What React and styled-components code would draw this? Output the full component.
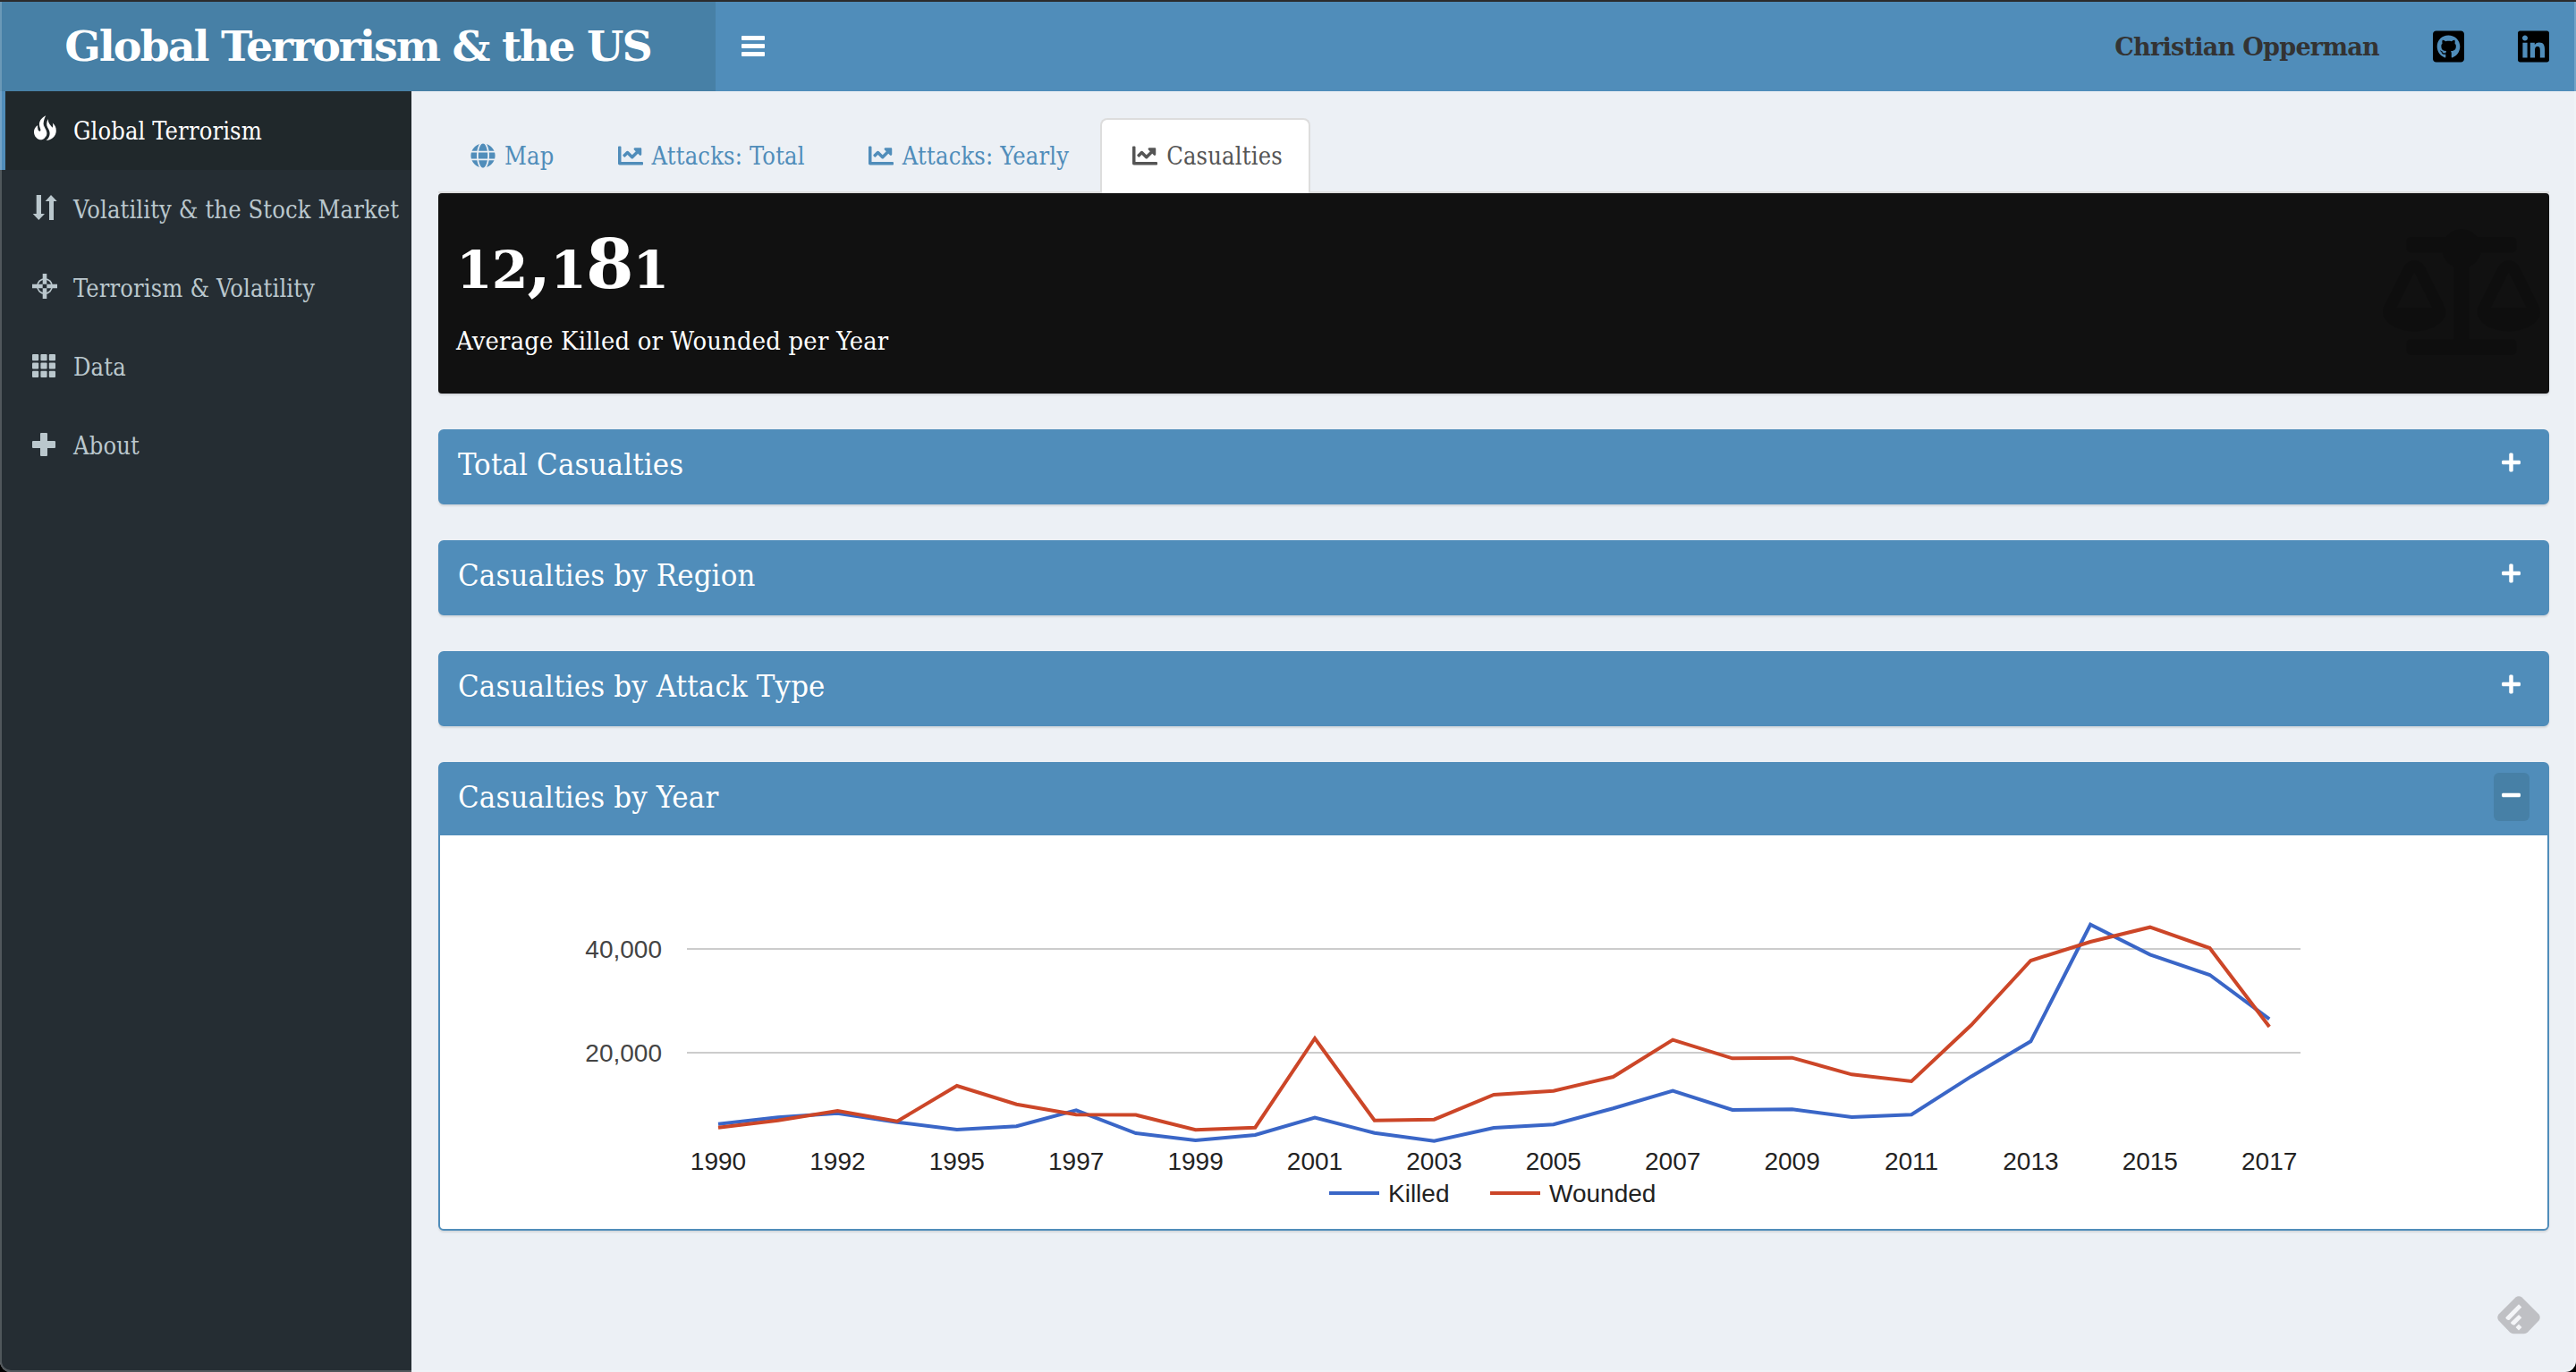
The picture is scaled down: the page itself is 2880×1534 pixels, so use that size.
import React from "react";
import styled, { createGlobalStyle } from "styled-components";
import {
  FaBalanceScale,
  FaChartLine,
  FaGithubSquare,
  FaGlobe,
  FaLinkedin,
  FaMinus,
  FaPlus,
} from "react-icons/fa";

const serif = `Georgia, "DejaVu Serif Condensed", "DejaVu Serif", serif`;
const serifBold = `Georgia, "DejaVu Serif", serif`;

const GlobalStyle = createGlobalStyle`
  * {
    box-sizing: border-box;
  }

  body {
    margin: 0;
    background: #000;
    font-family: ${serif};
  }
`;

const Page = styled.div`
  position: relative;
  display: flex;
  flex-direction: column;
  height: 1534px;
  overflow: hidden;
  border-top: 2px solid #2b2b2c;
  border-radius: 0 0 12px 12px;
  background: #ecf0f5;
`;

// Thin highlight that runs round the window
const WindowEdge = styled.div`
  position: absolute;
  inset: 0;
  border: 2px solid rgba(255, 255, 255, 0.2);
  border-top: 0;
  border-radius: 0 0 12px 12px;
  pointer-events: none;
`;

const Header = styled.header`
  display: flex;
  flex: none;
  height: 100px;
  background: #508dba;
`;

const Logo = styled.div`
  width: 800px;
  background: #4780a6;
  color: #fff;
  font-family: ${serifBold};
  font-size: 47.5px;
  font-weight: bold;
  letter-spacing: -2px;
  line-height: 99px;
  text-align: center;
  white-space: nowrap;
`;

const Navbar = styled.nav`
  display: flex;
  flex: 1;
  align-items: center;
  padding: 0 30px 0 29px;
`;

const Toggle = styled.div`
  display: flex;
  flex-direction: column;
  gap: 4px;
  width: 26px;
  margin: -2px auto 0 0;
`;

const ToggleBar = styled.span`
  height: 5px;
  border-radius: 1px;
  background: #fff;
`;

const Author = styled.span`
  margin-right: 60px;
  color: #333;
  font-family: ${serifBold};
  font-size: 27px;
  font-weight: bold;
  letter-spacing: -0.7px;
  white-space: nowrap;
`;

const SocialLink = styled.a`
  display: flex;
  margin-left: ${(props) => (props.$spaced ? "60px" : "0")};
  color: #000;
  font-size: 40px;

  svg {
    width: 35px;
  }
`;

const Main = styled.div`
  display: flex;
  flex: 1;
`;

const Sidebar = styled.aside`
  flex: none;
  width: 460px;
  background: #252d33;
`;

const MenuItem = styled.div`
  display: flex;
  align-items: center;
  height: 88px;
  padding-left: 30px;
  border-left: 6px solid ${(props) => (props.$active ? "#508dba" : "#252d33")};
  background: ${(props) => (props.$active ? "#20282b" : "transparent")};
  color: ${(props) => (props.$active ? "#fff" : "#bac7cd")};
  font-size: 27px;
  letter-spacing: 0.15px;
  white-space: nowrap;
`;

const MenuIcon = styled.svg`
  width: 28px;
  height: 28px;
  margin: -4px 18px 0 0;
  overflow: visible;
`;

const Content = styled.main`
  flex: 1;
  padding: 30px;
`;

const Tabs = styled.div`
  display: flex;
  height: 84px;
  border-bottom: 2px solid #ddd;
`;

const Tab = styled.div`
  display: flex;
  align-items: center;
  height: 84px;
  margin-right: 4px;
  padding: 0 29px 2px 34px;
  border: 2px solid ${(props) => (props.$active ? "#ddd" : "transparent")};
  border-bottom: 0;
  border-radius: 8px 8px 0 0;
  background: ${(props) => (props.$active ? "#fff" : "transparent")};
  color: ${(props) => (props.$active ? "#555" : "#508dba")};
  font-size: 27px;
  letter-spacing: 0.2px;
  white-space: nowrap;

  svg {
    width: 28px;
    height: 28px;
    margin-right: 10px;
  }
`;

const ValueBox = styled.section`
  display: flex;
  justify-content: space-between;
  height: 224px;
  padding: 40px 10px 0 20px;
  border-radius: 4px;
  background: #111;
  box-shadow: 0 2px 2px rgba(0, 0, 0, 0.1);
  color: #fff;
`;

const Value = styled.div`
  height: 94px;
  font-family: "DejaVu Serif", serif;
  font-size: 77px;
  font-weight: bold;
  letter-spacing: -1px;
  line-height: 79px;
  white-space: nowrap;
`;

const SmallFigure = styled.span`
  font-size: 58.5px;
`;

const ValueLabel = styled.div`
  font-size: 28.8px;
  letter-spacing: 0.2px;
  line-height: 62px;
`;

const ValueIcon = styled(FaBalanceScale)`
  width: 176px;
  height: 141px;
  color: rgba(0, 0, 0, 0.15);
`;

const Box = styled.section`
  margin-top: 40px;
  border: 2px solid #508dba;
  border-radius: 6px;
  background: #fff;
  box-shadow: 0 2px 2px rgba(0, 0, 0, 0.1);
`;

const BoxHeader = styled.div`
  display: flex;
  justify-content: space-between;
  height: 80px;
  padding: 0 20px;
  background: #508dba;
  color: #fff;
`;

const BoxTitle = styled.h3`
  margin: 0;
  font-size: 34.4px;
  font-weight: normal;
  letter-spacing: 0.15px;
  line-height: 74px;
`;

const BoxButton = styled.button`
  display: flex;
  align-items: flex-start;
  justify-content: center;
  width: 40px;
  height: 54px;
  margin-top: 10px;
  padding: 13px 1px 0 0;
  border: 0;
  border-radius: 6px;
  background: ${(props) => (props.$pressed ? "#4780a6" : "transparent")};
  color: #fff;
  font-size: 24px;

  svg {
    width: 21px;
  }
`;

const Chart = styled.svg`
  display: block;
  width: 100%;
  height: 440px;
  font-family: "Liberation Sans", Arial, sans-serif;
  font-size: 28px;
`;

const FeedlyMini = styled.svg`
  position: absolute;
  right: 40px;
  bottom: 42px;
  width: 48px;
  height: 43px;
`;

const icons = {
  fire: (
    <g transform="translate(0 -1)">
      <path d="M15.2.3C10 3 7.5 7 8 11c.3 2.5 1.6 4 1.4 6-.6 1.6-2.6.6-3-1.4-.4-1.6-.4-3.1-.2-4.6C3 13 1.8 16 2 19c.3 4.6 3.6 8.3 8.5 8.3 2.9-.3 4.9-2.7 4.5-5.7-.4-3-2.2-5.1-2.4-8.6C12.2 9 13 4 15.2.3z" />
      <path d="M17.8 4c-2 3.5-2 7-.6 9.6 1.4 2.6 2.6 4.4 2.4 7.2-.2 3-1.6 5.2-4 7.2 6.4-.4 11-5 11.2-10.6.1-3.8-1.5-6.8-4-8.8.6 2 .6 3.8-.2 5.2C20.8 11 17.6 9 17.8 4z" />
      <path d="M12.5 9c.4 4 3.3 6.5 3.8 10 .3 2-.2 4-1.6 5.5l-3-8z" />
    </g>
  ),
  sort: (
    <path d="M4.7 0H10v21h4L7.3 28 .7 21h4zM21 0l6.7 7H24v21h-5V7h-4.3z" />
  ),
  screenshot: (
    <>
      <circle cx="14" cy="14" r="8.2" fill="none" stroke="currentColor" strokeWidth="1.7" />
      <path d="M11.7 0h4.6v11.7h-4.6zM11.7 16.3h4.6V28h-4.6zM0 11.7h11.7v4.6H0zM16.3 11.7H28v4.6H16.3z" />
    </>
  ),
  grid: [0, 9.4, 18.8].map((x) =>
    [2, 11.4, 20.8].map((y) => (
      <rect key={`${x}-${y}`} x={x} y={y} width="7.2" height="7.2" rx="1" />
    ))
  ),
  plus: (
    <path d="M10 2h6q1 0 1 1v8h8q1 0 1 1v6q0 1-1 1h-8v8q0 1-1 1h-6q-1 0-1-1v-8H1q-1 0-1-1v-6q0-1 1-1h8V3q0-1 1-1z" />
  ),
};

const menu = [
  { icon: "fire", label: "Global Terrorism", active: true },
  { icon: "sort", label: "Volatility & the Stock Market" },
  { icon: "screenshot", label: "Terrorism & Volatility" },
  { icon: "grid", label: "Data" },
  { icon: "plus", label: "About" },
];

const tabs = [
  { Icon: FaGlobe, label: "Map" },
  { Icon: FaChartLine, label: "Attacks: Total" },
  { Icon: FaChartLine, label: "Attacks: Yearly" },
  { Icon: FaChartLine, label: "Casualties", active: true },
];

const closedBoxes = [
  "Total Casualties",
  "Casualties by Region",
  "Casualties by Attack Type",
];

// In thousands, one value per year; the data has no 1993
const killed = [
  6.26, 7.53, 8.33, 6.6, 5.17, 5.81, 8.91, 4.48, 3.1, 4.14, 7.47, 4.53, 2.98,
  5.52, 6.16, 9.26, 12.64, 8.97, 9.09, 7.59, 8.05, 15.4, 22.19, 44.7, 38.91,
  35, 26.5,
];
const wounded = [
  5.57, 6.95, 8.79, 6.78, 13.62, 10.05, 8.05, 8, 5.12, 5.57, 22.76, 6.95, 7.12,
  11.9, 12.64, 15.34, 22.47, 18.91, 19.02, 15.81, 14.5, 25.3, 37.76, 41.38,
  44.19, 40.17, 25,
];
const years = [
  1990, 1992, 1995, 1997, 1999, 2001, 2003, 2005, 2007, 2009, 2011, 2013, 2015,
  2017,
];

const xAt = (index) => 311 + index * 66.7;
const yAt = (value) => 127 + (40 - value) * 5.8;
const toPoints = (values) =>
  values.map((value, index) => `${xAt(index)},${yAt(value)}`).join(" ");

const YearChart = () => (
  <Chart viewBox="0 0 2356 440">
    {[40, 20].map((value) => (
      <g key={value}>
        <rect x="276" y={yAt(value) - 1} width="1804" height="2" fill="#ccc" />
        <text x="248" y={yAt(value) + 9.5} textAnchor="end" fill="#444">
          {value},000
        </text>
      </g>
    ))}
    <g fill="none" strokeWidth="4">
      <polyline points={toPoints(killed)} stroke="#3a66c7" />
      <polyline points={toPoints(wounded)} stroke="#cc4628" />
      <path d="M994 400h56" stroke="#3a66c7" />
      <path d="M1174 400h56" stroke="#cc4628" />
    </g>
    <g fill="#222">
      {years.map((year, index) => (
        <text key={year} x={xAt(index * 2)} y="374" textAnchor="middle">
          {year}
        </text>
      ))}
      <text x="1060" y="410">Killed</text>
      <text x="1240" y="410">Wounded</text>
    </g>
  </Chart>
);

// Old-style figures: 0, 1 and 2 only reach the x-height
const OldStyleNumber = ({ children }) => (
  <Value>
    {children.split("").map((char, index) =>
      "012".includes(char) ? (
        <SmallFigure key={index}>{char}</SmallFigure>
      ) : (
        char
      )
    )}
  </Value>
);

const App = () => {
  return (
    <>
      <GlobalStyle />
      <Page>
        <Header>
          <Logo>Global Terrorism &amp; the US</Logo>
          <Navbar>
            <Toggle>
              <ToggleBar />
              <ToggleBar />
              <ToggleBar />
            </Toggle>
            <Author>Christian Opperman</Author>
            <SocialLink>
              <FaGithubSquare />
            </SocialLink>
            <SocialLink $spaced>
              <FaLinkedin />
            </SocialLink>
          </Navbar>
        </Header>
        <Main>
          <Sidebar>
            {menu.map(({ icon, label, active }) => (
              <MenuItem key={label} $active={active}>
                <MenuIcon viewBox="0 0 28 28" fill="currentColor">
                  {icons[icon]}
                </MenuIcon>
                {label}
              </MenuItem>
            ))}
          </Sidebar>
          <Content>
            <Tabs>
              {tabs.map(({ Icon, label, active }) => (
                <Tab key={label} $active={active}>
                  <Icon />
                  {label}
                </Tab>
              ))}
            </Tabs>
            <ValueBox>
              <div>
                <OldStyleNumber>12,181</OldStyleNumber>
                <ValueLabel>Average Killed or Wounded per Year</ValueLabel>
              </div>
              <ValueIcon />
            </ValueBox>
            {closedBoxes.map((title) => (
              <Box key={title}>
                <BoxHeader>
                  <BoxTitle>{title}</BoxTitle>
                  <BoxButton>
                    <FaPlus />
                  </BoxButton>
                </BoxHeader>
              </Box>
            ))}
            <Box>
              <BoxHeader>
                <BoxTitle>Casualties by Year</BoxTitle>
                <BoxButton $pressed>
                  <FaMinus />
                </BoxButton>
              </BoxHeader>
              <YearChart />
            </Box>
          </Content>
        </Main>
        <FeedlyMini viewBox="0 0 48 43">
          <path
            d="M20.5 1.5Q24-1 27.5 1.5L46.500 20.500Q49 24 46.500 27.500L34 40.500Q32 42.300 30 42.300H18Q16 42.300 14 40.500L1.500 27.500Q-1 24 1.500 20.500z"
            fill="#bfc0c4"
          />
          <path
            d="M24 9.3l3.3 3.3-13.700 14.100q-1.100.6-2.600-.2L9.500 25q-.5-1 .3-1.600zM24 21l3.300 3.300-7.800 7.900q-1.500.6-3-.4l-1.300-1.300q-.4-.7.2-1.300zM24 31.500l3.500 3.600-3.500 3.500-3.500-3.500z"
            fill="#f4f5f8"
          />
        </FeedlyMini>
        <WindowEdge />
      </Page>
    </>
  );
};

export default App;
